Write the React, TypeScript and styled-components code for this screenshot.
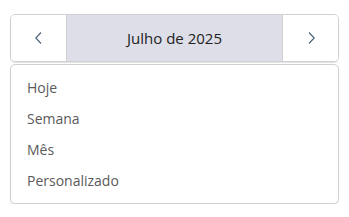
import styled, { createGlobalStyle } from "styled-components";

const GlobalStyle = createGlobalStyle`
  body {
    margin: 0;
    background: #ffffff;
    font-family: "Open Sans", "Noto Sans", sans-serif;
  }
`;

const options = ["Hoje", "Semana", "Mês", "Personalizado"];

function Chevron({ dir }: { dir: "left" | "right" }) {
  return (
    <svg width="14" height="14" viewBox="0 0 14 14" fill="none">
      {dir === "left" ? (
        <path d="M9 1.5L3.8 7L9 12.5" stroke="#456078" strokeWidth="1.1" />
      ) : (
        <path d="M5 1.5L10.2 7L5 12.5" stroke="#456078" strokeWidth="1.1" />
      )}
    </svg>
  );
}

export default function App() {
  return (
    <>
      <GlobalStyle />
      <Wrapper>
        <Toolbar>
          <NavButton $side="left">
            <Chevron dir="left" />
          </NavButton>
          <Title>Julho de 2025</Title>
          <NavButton $side="right">
            <Chevron dir="right" />
          </NavButton>
        </Toolbar>
        <Menu>
          {options.map((opt) => (
            <MenuItem key={opt}>{opt}</MenuItem>
          ))}
        </Menu>
      </Wrapper>
    </>
  );
}

const Wrapper = styled.div`
  padding: 14px 10px 0 10px;
  display: flex;
  flex-direction: column;
  gap: 2px;
`;

const Toolbar = styled.div`
  display: grid;
  grid-template-columns: 56px 1fr 56px;
  height: 48px;
  box-sizing: border-box;
  border: 1px solid #cfcfd4;
  border-radius: 5px;
  overflow: hidden;
  box-shadow: 0 1px 1px rgba(0, 0, 0, 0.12);
`;

const NavButton = styled.div<{ $side: "left" | "right" }>`
  display: flex;
  align-items: center;
  justify-content: center;
  background: #ffffff;
  border-right: ${(p) => (p.$side === "left" ? "1px solid #cfcfd4" : "none")};
  border-left: ${(p) => (p.$side === "right" ? "1px solid #cfcfd4" : "none")};
`;

const Title = styled.div`
  display: flex;
  align-items: center;
  justify-content: center;
  background: #dddee7;
  color: #222222;
  font-size: 15px;
`;

const Menu = styled.div`
  border: 1px solid #cfcfd4;
  border-radius: 5px;
  padding: 7px 0;
  box-shadow: 0 1px 1px rgba(0, 0, 0, 0.1);
`;

const MenuItem = styled.div`
  height: 31px;
  display: flex;
  align-items: center;
  padding-left: 16px;
  color: #5a5a5a;
  font-size: 14px;
`;
